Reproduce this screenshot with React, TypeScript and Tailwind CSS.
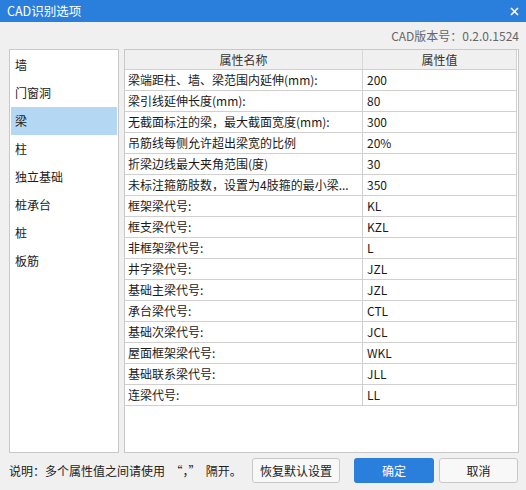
import { useState } from "react";

const categories = ["墙", "门窗洞", "梁", "柱", "独立基础", "桩承台", "桩", "板筋"];

const rows: [string, string][] = [
  ["梁端距柱、墙、梁范围内延伸(mm):", "200"],
  ["梁引线延伸长度(mm):", "80"],
  ["无截面标注的梁，最大截面宽度(mm):", "300"],
  ["吊筋线每侧允许超出梁宽的比例", "20%"],
  ["折梁边线最大夹角范围(度)", "30"],
  ["未标注箍筋肢数，设置为4肢箍的最小梁...", "350"],
  ["框架梁代号:", "KL"],
  ["框支梁代号:", "KZL"],
  ["非框架梁代号:", "L"],
  ["井字梁代号:", "JZL"],
  ["基础主梁代号:", "JZL"],
  ["承台梁代号:", "CTL"],
  ["基础次梁代号:", "JCL"],
  ["屋面框架梁代号:", "WKL"],
  ["基础联系梁代号:", "JLL"],
  ["连梁代号:", "LL"],
];

export default function App() {
  const [active, setActive] = useState(2);

  return (
    <div
      lang="zh-CN"
      className="w-[526px] h-[490px] bg-[#f0f0f0] flex flex-col text-[12px] text-[#1a1a1a] font-['Microsoft_YaHei','Noto_Sans_CJK_SC',sans-serif] overflow-hidden"
    >
      <div className="h-[22px] shrink-0 bg-[#2b7fdc] flex items-center justify-between pl-[7px] pr-[7px] text-white">
        <span className="text-[12.5px] leading-[22px]">CAD识别选项</span>
        <svg width="9" height="9" viewBox="0 0 9 9">
          <path d="M1 1L8 8M8 1L1 8" stroke="white" strokeWidth="1.6" />
        </svg>
      </div>

      <div className="h-[27px] shrink-0 flex items-center justify-end pr-[7px] text-[12px] text-[#666]">
        CAD版本号：0.2.0.1524
      </div>

      <div className="flex gap-[5px] pl-[9px] h-[404px] shrink-0">
        <div className="w-[110px] bg-white border border-[#c8c8c8] pt-[1px] px-[1px]">
          {categories.map((c, i) => (
            <div
              key={i}
              onClick={() => setActive(i)}
              className={`h-[28px] flex items-center pl-[4px] leading-none cursor-default ${
                i === active ? "bg-[#b4d8f4]" : ""
              }`}
            >
              {c}
            </div>
          ))}
        </div>

        <div className="w-[395px] bg-white border border-[#c8c8c8]">
          <div className="w-[392px] border-r border-[#d0d0d0]">
            <div className="flex h-[20px] bg-[#f0f0f0] border-b border-[#d0d0d0] text-[#333]">
              <div className="w-[238px] border-r border-[#d8d8d8] flex items-center justify-center leading-none">
                属性名称
              </div>
              <div className="flex-1 flex items-center justify-center leading-none">属性值</div>
            </div>
            {rows.map(([name, value], i) => (
              <div key={i} className="flex h-[21px] border-b border-[#d0d0d0]">
                <div className="w-[238px] border-r border-[#d0d0d0] flex items-center pl-[3px] leading-none whitespace-nowrap overflow-hidden">
                  {name}
                </div>
                <div className="flex-1 flex items-center pl-[4px] leading-none">{value}</div>
              </div>
            ))}
          </div>
        </div>
      </div>

      <div className="flex items-center h-[25px] mt-[5px] pl-[9px] pr-[8px]">
        <span className="text-[12px] text-[#222] whitespace-pre">说明：多个属性值之间请使用  “，”  隔开。</span>
        <div className="ml-auto flex">
          <button className="w-[88px] h-[25px] border border-[#c8c8c8] rounded-[3px] bg-[#f8f8f8] text-[12px] text-[#222]">
            恢复默认设置
          </button>
          <button className="w-[80px] h-[25px] ml-[14px] rounded-[3px] bg-[#2b7fdc] text-[12px] text-white">
            确定
          </button>
          <button className="w-[79px] h-[25px] ml-[5px] border border-[#c8c8c8] rounded-[3px] bg-[#f8f8f8] text-[12px] text-[#222]">
            取消
          </button>
        </div>
      </div>
    </div>
  );
}
